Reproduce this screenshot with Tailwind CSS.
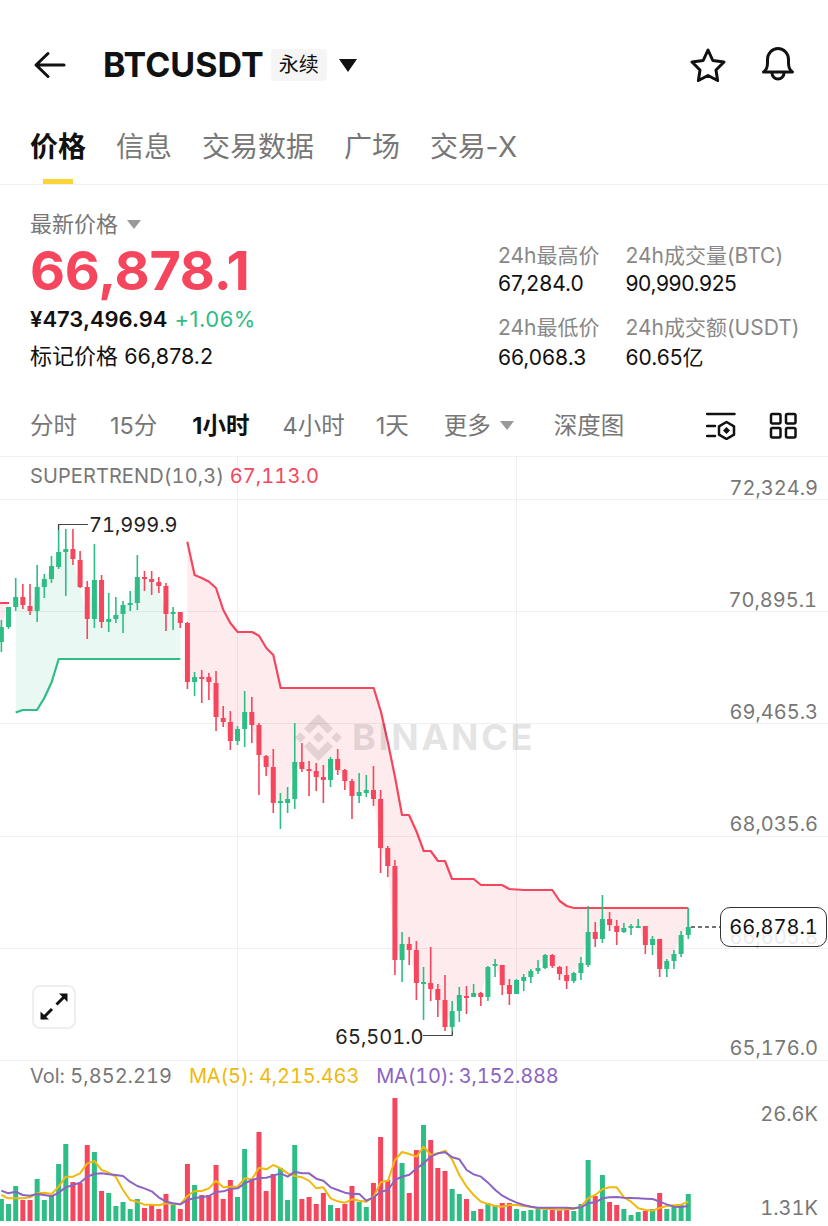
<!DOCTYPE html>
<html lang="zh-CN">
  <head>
    <meta charset="UTF-8" />
    <meta name="viewport" content="width=device-width, initial-scale=1.0" />
    <title>BTCUSDT</title>
    <script src="https://cdn.jsdelivr.net/npm/@tailwindcss/browser@4"></script>
  </head>
  <body class="bg-white">
    <div class="w-[828px] h-[1226px] overflow-hidden bg-white text-[#111] font-['Inter','Noto_Sans_CJK_SC',sans-serif]">
      <!-- header -->
      <div class="h-[130px] pt-[33px]">
        <div class="h-[64px] flex items-center pl-[33px] pr-[32px]">
          <svg class="w-[34px] h-[30px]" viewBox="33 50 34 30" fill="none" stroke="#111" stroke-width="3" stroke-linecap="round" stroke-linejoin="round">
            <path d="M64 65H37M48 53.5 36 65l12 11.5" />
          </svg>
          <span class="ml-[36px] text-[34px] leading-[40px] font-bold">BTCUSDT</span>
          <span class="ml-[7px] w-[56px] h-[32px] rounded-[4px] bg-[#f5f5f5] text-[20px] leading-[32px] text-center">永续</span>
          <svg class="ml-[12px] w-[18px] h-[13px]" viewBox="0 0 18 13" fill="#111"><path d="M0 0h18L9 13z" /></svg>
          <svg class="ml-auto w-[36px] h-[36px]" viewBox="690 47 36 36" fill="none" stroke="#111" stroke-width="3" stroke-linejoin="round">
            <path d="M708 50l4.8 10.5L724 62l-8 8 1.6 10.5L708 75.5l-9.600 5L700 70l-8-8 11.200-1.500z" />
          </svg>
          <svg class="ml-[34px] w-[36px] h-[38px]" viewBox="760 46 36 38" fill="none" stroke="#111" stroke-width="3" stroke-linejoin="round" stroke-linecap="round">
            <path d="M763.500 72c3-2 4-5 4-9v-3.500a10.500 11 0 0 1 21 0V63c0 4 1 7 4 9z" />
            <path d="M772 73a6 6 0 0 0 12 0" />
          </svg>
        </div>
      </div>

      <!-- tabs -->
      <div class="relative h-[55px] border-b border-[#f0f0f0] pl-[30px] flex gap-[30px] text-[28px] leading-[34px]">
        <span class="font-bold text-[#111]">价格</span>
        <span class="text-[#777]">信息</span>
        <span class="text-[#777]">交易数据</span>
        <span class="text-[#777]">广场</span>
        <span class="text-[#777] tracking-[-0.3px]">交易-X</span>
        <div class="absolute left-[43px] bottom-0 w-[30px] h-[5px] bg-[#fcd535]"></div>
      </div>

      <!-- price block -->
      <div class="h-[208px] flex justify-between">
        <div class="pl-[30px] pt-[25px]">
          <div class="flex items-center h-[28px] text-[22px] leading-[28px] text-[#777]">
            最新价格
            <svg class="ml-[9px] w-[14px] h-[9px]" viewBox="0 0 14 9" fill="#999"><path d="M0 0h14L7 9z" /></svg>
          </div>
          <div class="mt-[3px] text-[54px] leading-[60px] font-bold text-[#f6465d] tracking-[-0.2px]">66,878.1</div>
          <div class="mt-[4px] flex gap-[7px] text-[22px] leading-[28px]">
            <span class="font-semibold">¥473,496.94</span>
            <span class="text-[#2ebd85] tracking-[0.5px]">+1.06%</span>
          </div>
          <div class="mt-[9px] text-[22px] leading-[28px]">标记价格 <span class="text-[21.5px]">66,878.2</span></div>
        </div>
        <div class="pt-[57px] w-[330px] grid grid-cols-[127.5px_1fr] text-[21px] leading-[28px] grid-rows-[28px_44px_28px_28px] self-start whitespace-nowrap">
          <span class="text-[#888]">24h最高价</span>
          <span class="text-[#888]">24h成交量(BTC)</span>
          <span>67,284.0</span>
          <span class="tracking-[-0.4px]">90,990.925</span>
          <span class="text-[#888]">24h最低价</span>
          <span class="text-[#888]">24h成交额(USDT)</span>
          <span class="mt-[2px]">66,068.3</span>
          <span class="mt-[2px]">60.65亿</span>
        </div>
      </div>

      <!-- time frames -->
      <div class="h-[64px] pl-[30px] pt-[2px] flex items-center text-[23.5px] leading-[32px] text-[#777] border-b border-[#f0f0f0]">
        <span>分时</span>
        <span class="ml-[33px]">15分</span>
        <span class="ml-[35px] font-bold text-[#111]">1小时</span>
        <span class="ml-[33px]">4小时</span>
        <span class="ml-[31px]">1天</span>
        <span class="ml-[35px]">更多</span>
        <svg class="ml-[9px] w-[14px] h-[9px]" viewBox="0 0 14 9" fill="#999"><path d="M0 0h14L7 9z" /></svg>
        <span class="ml-[40px]">深度图</span>
        <svg class="ml-[82px] w-[30px] h-[28px]" viewBox="705 413 30 28" fill="none" stroke="#111" stroke-width="2.500" stroke-linecap="round" stroke-linejoin="round">
          <path d="M706 415h27.500M706 427h8M706 437h8" />
          <path d="M725.500 423l7.500 4.300v8.400l-7.500 4.300-7.500-4.300v-8.400z" />
          <path d="M725.500 428l3.500 3.500-3.500 3.500-3.500-3.500z" fill="#111" stroke="none" />
        </svg>
        <svg class="ml-[33px] w-[28px] h-[28px]" viewBox="768 413 28 28" fill="none" stroke="#111" stroke-width="2.500">
          <rect x="770" y="415" width="9.500" height="9.500" rx="1.500" />
          <rect x="785" y="415" width="9.500" height="9.500" rx="1.500" />
          <rect x="770" y="429" width="9.500" height="9.500" rx="1.500" />
          <rect x="785" y="429" width="9.500" height="9.500" rx="1.500" />
        </svg>
      </div>

      <!-- chart canvas -->
      <div class="relative h-[769px] tabular-nums">
        <svg id="chart" class="absolute inset-0 w-[828px] h-[769px]" viewBox="0 457 828 769"></svg>

        <div class="absolute left-[30px] top-[6px] text-[20px] leading-[26px] text-[#777] tracking-[0.1px]">SUPERTREND(10,3) <span class="text-[#f6465d]">67,113.0</span></div>

        <!-- watermark -->
        <div class="absolute left-[295px] top-[257px] flex items-center gap-[10px] opacity-10">
          <svg class="w-[47px] h-[47px]" viewBox="0 0 126.610 126.610" fill="#000">
            <path d="M38.730 53.200l24.590-24.580 24.600 24.600 14.300-14.310L63.320 0 24.430 38.900zM0 63.310 14.300 49l14.310 14.310-14.310 14.300zM38.730 73.410 63.320 98l24.600-24.600 14.310 14.290-38.900 38.910-38.910-38.880zM98 63.310 112.300 49l14.310 14.300-14.310 14.320zM77.830 63.300 63.320 48.780 52.590 59.510l-1.240 1.230-2.540 2.540 14.510 14.500 14.510-14.470z" />
          </svg>
          <span class="text-[36px] leading-[47px] font-bold tracking-[2.700px] text-black">BINANCE</span>
        </div>

        <!-- price axis -->
        <span class="absolute right-[10px] top-[18px] text-[20px] leading-[26px] text-[#777]">72,324.9</span>
        <span class="absolute right-[11px] top-[130px] text-[20px] leading-[26px] text-[#777]">70,895.1</span>
        <span class="absolute right-[10px] top-[242px] text-[20px] leading-[26px] text-[#777]">69,465.3</span>
        <span class="absolute right-[10px] top-[354px] text-[20px] leading-[26px] text-[#777]">68,035.6</span>
        <span class="absolute right-[10px] top-[467px] text-[20px] leading-[26px] text-[#777]">66,605.8</span>
        <span class="absolute right-[10px] top-[578px] text-[20px] leading-[26px] text-[#777]">65,176.0</span>

        <!-- high / low marks -->
        <span class="absolute left-[89px] top-[55px] text-[20px] leading-[26px] text-[#222]">71,999.9</span>
        <span class="absolute left-[335px] top-[567px] text-[20px] leading-[26px] text-[#222]">65,501.0</span>

        <!-- last price tag -->
        <div class="absolute left-[720px] top-[450px] w-[107px] h-[40px] rounded-[10px] border-[1.500px] border-[#333] bg-white/85 text-[20px] leading-[39px] text-center text-[#111]">66,878.1</div>

        <!-- fullscreen -->
        <div class="absolute left-[32px] top-[528px] w-[44px] h-[44px] rounded-[8px] border-2 border-[#eeeeee] bg-white">
          <svg class="absolute -left-[2px] -top-[2px] w-[44px] h-[44px]" viewBox="32 985 44 44" fill="none" stroke="#111" stroke-width="3">
            <path d="M56.500 1004.500 66 995" />
            <path d="M52 1009 42.500 1018.500" />
            <path d="M59 993.500h8.500v8.500z" fill="#111" stroke="none" />
            <path d="M40.500 1011.500v8h8.500z" fill="#111" stroke="none" />
          </svg>
        </div>

        <!-- volume legend -->
        <div class="absolute left-[30px] top-[606px] flex text-[20px] leading-[26px] text-[#777]">
          <span>Vol: 5,852.219</span>
          <span class="ml-[17px] tracking-[-0.15px] text-[#f0b90b]">MA(5): 4,215.463</span>
          <span class="ml-[17px] tracking-[-0.2px] text-[#8a63c4]">MA(10): 3,152.888</span>
        </div>
        <span class="absolute right-[10px] top-[644px] text-[20px] leading-[26px] text-[#777]">26.6K</span>
        <span class="absolute right-[10px] top-[738px] text-[20px] leading-[26px] text-[#777]">1.31K</span>
      </div>
    </div>

    <script>
      const UP = "#2ebd85";
      const DOWN = "#f6465d";
      const stepX = 7.155;
      const xAt = (i) => 15.7 + stepX * (i - 2);

      // high, low, body top, body bottom, 1 = green
      const candles = [
        [620,652,627,642,1],[607,629,607,627,1],[578,611,597,607,1],[584,609,597,605,0],[584,615,606,611,0],
        [565,622,587,611,1],[574,598,579,587,1],[556,583,566,579,1],[524,569,552,567,1],[529,596,549,552,1],
        [529,565,549,559,0],[551,588,560,587,0],[581,639,587,619,0],[544,628,580,619,1],[575,628,580,622,0],
        [593,632,619,622,1],[597,623,615,619,1],[601,633,605,614,1],[591,611,603,605,1],[555,610,577,603,1],
        [571,591,577,579,0],[571,595,579,582,0],[577,593,582,586,0],[583,631,586,614,0],[607,630,612,614,1],
        [612,628,612,623,0],[622,689,623,682,0],[672,696,677,682,1],[670,703,677,679,0],[673,700,677,682,0],
        [671,731,683,717,0],[706,727,718,722,0],[711,750,722,741,0],[726,745,729,741,1],[691,747,712,729,1],
        [697,743,712,725,0],[723,795,725,755,0],[755,776,756,767,0],[749,813,767,803,0],[793,829,801,803,1],
        [787,813,799,803,1],[723,809,762,799,1],[743,772,762,769,0],[761,796,769,771,0],[763,791,771,777,0],
        [765,803,777,780,0],[757,787,759,780,1],[749,775,759,770,0],[769,790,770,781,0],[779,819,781,796,0],
        [773,803,792,796,1],[775,797,790,793,1],[766,806,790,799,0],[790,873,799,848,0],[846,877,848,866,0],
        [860,975,866,960,0],[932,982,944,960,1],[937,965,944,950,0],[941,1000,950,983,0],[967,1020,982,984,1],
        [947,1001,983,989,0],[984,1017,989,1000,0],[975,1031,1000,1027,0],[1001,1035,1011,1027,1],[987,1022,995,1011,1],
        [986,1014,996,998,0],[984,997,993,997,1],[992,1006,993,997,0],[966,1001,967,997,1],[959,977,964,966,1],
        [965,995,965,985,0],[979,1005,985,994,0],[979,994,980,994,1],[974,991,977,981,1],[969,983,971,977,1],
        [960,974,968,971,1],[954,969,955,968,1],[954,968,955,966,0],[966,980,967,974,0],[966,989,975,981,0],
        [972,983,973,981,1],[957,980,963,973,1],[906,967,932,965,1],[922,947,932,939,0],[895,943,919,939,1],
        [912,931,919,925,0],[920,945,926,932,0],[923,933,928,932,1],[924,935,926,928,1],[919,927,926,928,1],
        [926,954,926,945,0],[936,955,939,945,1],[939,977,939,969,0],[959,977,961,969,1],[950,969,954,961,1],
        [931,957,935,954,1],[908,939,927,935,1]
      ];

      const volumes = [
        1199,1204,1186,1200,1200,1179,1200,1195,1164,1144,1182,1183,1145,1152,1191,1193,1206,1202,1209,1199,
        1208,1204,1209,1194,1205,1209,1164,1185,1195,1195,1165,1199,1180,1197,1149,1179,1132,1191,1174,1168,
        1200,1145,1199,1197,1204,1193,1205,1208,1204,1186,1202,1207,1183,1137,1180,1098,1163,1193,1150,1125,
        1140,1168,1171,1189,1194,1199,1211,1209,1203,1205,1203,1203,1209,1211,1210,1209,1210,1210,1210,1209,
        1211,1204,1160,1196,1175,1202,1205,1209,1215,1212,1211,1209,1193,1209,1205,1205,1194
      ];
      const volColor = [
        1,1,1,0,0,1,1,1,1,1,0,0,0,1,0,1,1,1,1,1,0,0,0,0,1,0,0,1,0,0,0,0,0,1,1,0,0,0,0,1,
        1,1,0,0,0,0,1,0,0,0,1,1,0,0,0,0,1,0,0,1,0,0,0,1,1,0,1,0,1,1,0,0,1,1,1,1,1,0,0,0,
        1,1,1,0,1,0,0,1,1,1,0,1,0,1,1,1,1
      ];

      const ma5 = [[4,405],[25,415],[47,415],[68,415],[90,412],[111,400],[133,398],[155,402],[176,380],[197,350],[219,350],[240,340],[262,310],[283,303],[305,330],[326,338],[347,350],[369,390],[390,420],[412,425],[433,434],[455,434],[476,436],[498,430],[519,432],[541,433],[562,408],[584,393],[605,393],[627,385],[648,362],[670,382],[691,380],[713,380],[734,355],[756,358],[777,323],[799,328],[820,315],[842,325],
        [863,340],[884,348],[906,352],[927,362],[949,385],[970,382],[992,415],[1013,424],[1035,428],[1056,418],[1078,422],[1099,425],[1121,410],[1142,367],[1164,362],[1185,300],[1206,276],[1228,282],[1250,290],[1271,260],[1292,285],[1314,280],[1336,272],[1357,300],[1378,345],[1400,380],[1421,405],[1443,425],[1464,432],[1486,438],[1507,440],[1528,435],[1550,435],[1571,438],[1593,440],[1614,445],[1636,447],[1657,447],[1678,450],
        [1700,447],[1721,447],[1743,440],[1764,415],[1786,405],[1807,388],[1829,382],[1850,382],[1872,412],[1893,425],[1915,445],[1936,450],[1958,452],[1979,444],[2000,438],[2022,436],[2043,434],[2065,425]];
      const ma10 = [[4,392],[25,400],[47,395],[68,405],[90,407],[111,402],[133,405],[155,409],[176,398],[197,382],[219,375],[240,368],[262,350],[283,342],[305,340],[326,343],[347,345],[369,348],[390,365],[412,378],[433,385],[455,394],[476,412],[498,425],[519,430],[541,433],[562,420],[584,414],[605,412],[627,408],[648,396],[670,394],[691,387],[713,385],[734,370],[756,360],[777,354],[799,353],[820,347],[842,340],
        [863,350],[884,335],[906,340],[927,340],[949,356],[970,362],[992,382],[1013,390],[1035,398],[1056,402],[1078,402],[1099,422],[1121,412],[1142,395],[1164,390],[1185,360],[1206,350],[1228,344],[1250,325],[1271,310],[1292,290],[1314,280],[1336,277],[1357,292],[1378,298],[1400,330],[1421,343],[1443,350],[1464,368],[1486,390],[1507,407],[1528,418],[1550,428],[1571,435],[1593,440],[1614,443],[1636,443],[1657,443],[1678,443],
        [1700,443],[1721,445],[1743,442],[1764,430],[1786,427],[1807,415],[1829,412],[1850,411],[1872,413],[1893,414],[1915,415],[1936,416],[1958,417],[1979,425],[2000,433],[2022,440],[2043,441],[2065,438]];

      const redLine = [[187.3,541.7],[194.6,575],[201.7,578],[209,581.7],[216,588],[223.3,610],[230.3,623],[237.7,632],[252,632],[259,635.7],[266.3,648],[273.3,655],[280.7,688],[373.7,688],[381,712],[388,743],[395,777],[402,815],[409,815],[416.7,832],[423.7,851],[430.7,851],[438,861],[445,861],[452,879],[473.7,879],[481,885],[502,885],[509.3,889],[523.7,890],[552.3,890],[559.7,901],[566.7,906],[574,908],[688.3,908]];
      const greenLine = [[15.7,712.5],[22.7,710],[37,710],[44.3,698],[51.7,682],[58.7,659],[180.3,659]];

      const pts = (list) => list.map((p) => p[0] + "," + p[1]).join(" ");
      const closeOf = (c) => (c[4] ? c[2] : c[3]);
      const hLine = (y) => `<line x1="0" x2="828" y1="${y}" y2="${y}" stroke="#f0f0f0" stroke-width="1"/>`;
      const vLine = (x) => `<line x1="${x}" x2="${x}" y1="457" y2="1226" stroke="#f0f0f0" stroke-width="1"/>`;

      let svg = "";
      [499.5, 611.5, 723.5, 836.5, 948.5, 1060.5].forEach((y) => (svg += hLine(y)));
      [237.5, 516.5].forEach((x) => (svg += vLine(x)));

      // band fills: closes on one side, trend line on the other
      const greenCloses = candles.slice(2, 26).map((c, i) => [xAt(i + 2), closeOf(c)]);
      svg += `<polygon points="${pts(greenCloses.concat(greenLine.slice().reverse()))}" fill="#2ebd85" fill-opacity="0.1"/>`;
      const redCloses = candles.slice(26).map((c, i) => [xAt(i + 26), closeOf(c)]);
      svg += `<polygon points="${pts(redLine.concat(redCloses.slice().reverse()))}" fill="#f6465d" fill-opacity="0.11"/>`;
      svg += `<polygon points="0,603 8.5,603 8.5,607 1.4,627 0,627" fill="#f6465d" fill-opacity="0.11"/>`;

      svg += `<polyline points="${pts(redLine)}" fill="none" stroke="${DOWN}" stroke-width="2.2" stroke-linejoin="round"/>`;
      svg += `<polyline points="${pts(greenLine)}" fill="none" stroke="${UP}" stroke-width="2.2" stroke-linejoin="round"/>`;
      svg += `<line x1="0" x2="9" y1="603" y2="603" stroke="${DOWN}" stroke-width="2"/>`;

      candles.forEach((c, i) => {
        const x = xAt(i);
        const col = c[4] ? UP : DOWN;
        svg += `<rect x="${x - 0.8}" y="${c[0]}" width="1.6" height="${c[1] - c[0]}" fill="${col}"/>`;
        svg += `<rect x="${x - 2.5}" y="${c[2]}" width="5" height="${Math.max(c[3] - c[2], 2)}" fill="${col}"/>`;
      });

      volumes.forEach((top, i) => {
        svg += `<rect x="${xAt(i) - 2.5}" y="${top}" width="5" height="${1221 - top}" fill="${volColor[i] ? UP : DOWN}"/>`;
      });

      const scaled = (list) => list.map((p) => [p[0] / 3, 1060 + p[1] / 3]);
      svg += `<polyline points="${pts(scaled(ma5))}" fill="none" stroke="#f0b90b" stroke-width="2" stroke-linejoin="round"/>`;
      svg += `<polyline points="${pts(scaled(ma10))}" fill="none" stroke="#8a63c4" stroke-width="2" stroke-linejoin="round"/>`;

      // high, low and last price leaders
      svg += `<path d="M58 524.500h30M58.500 524v6" fill="none" stroke="#444" stroke-width="1"/>`;
      svg += `<path d="M423 1035.500h29.500v-4" fill="none" stroke="#444" stroke-width="1"/>`;
      svg += `<path d="M691 927h29" fill="none" stroke="#444" stroke-width="1.500" stroke-dasharray="4 3"/>`;
      svg += `<line x1="688.3" x2="688.3" y1="908" y2="927" stroke="${UP}" stroke-width="1.6"/>`;

      document.getElementById("chart").innerHTML = svg;
    </script>
  </body>
</html>
